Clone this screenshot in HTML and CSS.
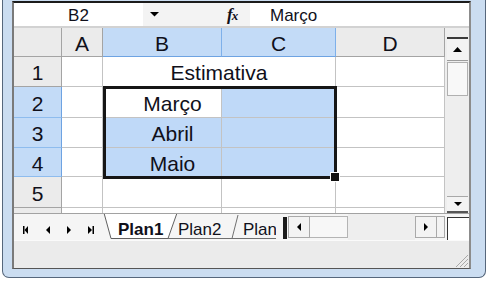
FILE: index.html
```html
<!DOCTYPE html>
<html lang="pt">
<head>
    <meta charset="UTF-8">
    <title>Plan1</title>
    <link rel="stylesheet" href="styles.css">
</head>
<body>
<div class="window">
    <div class="app">
        <!-- barra de fórmulas -->
        <div class="fbar">
            <div class="namebox">B2</div>
            <div class="fbtns">
                <svg class="dd" width="9" height="5" viewBox="0 0 9 5"><polygon points="0,0 9,0 4.5,4.5" fill="#000"/></svg>
                <span class="fx"><i>f</i><i class="x">x</i></span>
            </div>
            <div class="formula">Março</div>
        </div>

        <div class="main">
            <div class="sheet">
                <div class="hd corner"></div>
                <div class="hd">A</div>
                <div class="hd on">B</div>
                <div class="hd on">C</div>
                <div class="hd">D</div>

                <div class="rh">1</div>
                <div class="c"></div>
                <div class="c merged">Estimativa</div>
                <div class="c"></div>

                <div class="rh on">2</div>
                <div class="c"></div>
                <div class="c txt active">Março<div class="selbox"></div></div>
                <div class="c sel"></div>
                <div class="c"></div>

                <div class="rh on">3</div>
                <div class="c"></div>
                <div class="c sel txt">Abril</div>
                <div class="c sel"></div>
                <div class="c"></div>

                <div class="rh on">4</div>
                <div class="c"></div>
                <div class="c sel txt">Maio</div>
                <div class="c sel"></div>
                <div class="c"></div>

                <div class="rh">5</div>
                <div class="c"></div>
                <div class="c"></div>
                <div class="c"></div>
                <div class="c"></div>

                <div class="rh">6</div>
                <div class="c"></div>
                <div class="c"></div>
                <div class="c"></div>
                <div class="c"></div>
            </div>
            <div class="vscroll">
                <div class="vbtn up">
                    <svg width="9" height="5" viewBox="0 0 9 5"><polygon points="0,5 9,5 4.5,0" fill="#000"/></svg>
                </div>
                <div class="vthumb"></div>
                <div class="vtrack"></div>
                <div class="vbtn down">
                    <svg width="8" height="4" viewBox="0 0 8 4"><polygon points="0,0 8,0 4,4" fill="#000"/></svg>
                </div>
            </div>
        </div>

        <!-- abas das planilhas -->
        <div class="tabbar">
            <div class="nav">
                <svg width="86" height="25" viewBox="0 0 86 25">
                    <rect x="9" y="12" width="1.5" height="8" fill="#000"/>
                    <polygon points="14,12 10.5,16 14,20" fill="#000"/>
                    <polygon points="36,12 32,16 36,20" fill="#000"/>
                    <polygon points="53,12 57,16 53,20" fill="#000"/>
                    <polygon points="74,12 78,16 74,20" fill="#000"/>
                    <rect x="78.5" y="12" width="1.5" height="8" fill="#000"/>
                </svg>
            </div>
            <div class="tabs">
                <svg class="tabline" width="176" height="25" viewBox="0 0 176 25">
                    <polyline points="68,24.5 132,24.5 138,1" fill="none" stroke="#707070"/>
                    <polyline points="132,24.5 176,24.5" fill="none" stroke="#707070"/>
                    <polygon points="4,-1 11,24.5 68,24.5 77,-1" fill="#fff"/>
                    <polyline points="4,-1 11,24.5 68,24.5 77,-1" fill="none" stroke="#606060"/>
                </svg>
                <span class="tab t1">Plan1</span>
                <span class="tab t2">Plan2</span>
                <span class="tab t3">Plan3</span>
            </div>
            <div class="gap"></div>
            <div class="hscroll">
                <div class="hsplit"></div>
                <div class="hbtn">
                    <svg width="4" height="8" viewBox="0 0 4 8"><polygon points="4,0 0,4 4,8" fill="#000"/></svg>
                </div>
                <div class="hthumb"></div>
                <div class="htrack"></div>
                <div class="hbtn">
                    <svg width="4" height="8" viewBox="0 0 4 8"><polygon points="0,0 4,4 0,8" fill="#000"/></svg>
                </div>
                <div class="hbox"></div>
            </div>
            <div class="hcorner"></div>
        </div>

        <div class="status">
            <svg class="grip" width="13" height="13" viewBox="0 0 13 13">
                <line x1="1" y1="13" x2="13" y2="1" stroke="#a8a8a8"/>
                <line x1="5" y1="13" x2="13" y2="5" stroke="#a8a8a8"/>
                <line x1="9" y1="13" x2="13" y2="9" stroke="#a8a8a8"/>
            </svg>
        </div>
    </div>
</div>
</body>
</html>
```

FILE: styles.css
```css
* {
    margin: 0;
    padding: 0;
    box-sizing: border-box;
}

body {
    background: #fff;
    font-family: "Liberation Sans", Arial, sans-serif;
    color: #10101a;
}

.window {
    margin-left: 2px;
    width: 484px;
    height: 278px;
    padding: 1px 14px 8px 9px;
    border: 1px solid #56677c;
    border-top: none;
    border-radius: 0 0 7px 7px;
    background: #cbddf1;
}

.app {
    height: 268px;
    display: flex;
    flex-direction: column;
    background: #fff;
    border-top: 2px solid #1b1b1b;
    border-left: 2px solid #7a7a7a;
    border-right: 2px solid #8c8c8c;
    border-bottom: 1px solid #555;
}

/* barra de fórmulas */
.fbar {
    height: 25px;
    display: flex;
    border-bottom: 2px solid #d2d2d2;
    font-size: 17px;
    line-height: 23px;
}

.namebox {
    width: 129px;
    text-align: center;
    padding-top: 1px;
}

.fbtns {
    width: 107px;
    display: flex;
    align-items: center;
    background: #f3f3f3;
}

.dd {
    margin-left: 7px;
}

.fx {
    margin-left: 68px;
    font-family: "Liberation Serif", serif;
    font-weight: bold;
    font-size: 17px;
    line-height: 17px;
}

.fx .x {
    font-size: 13px;
    margin-left: -1px;
}

.formula {
    flex: 1;
    padding: 1px 0 0 20px;
}

/* grade */
.main {
    height: 185px;
    display: flex;
}

.sheet {
    width: 431px;
    height: 185px;
    overflow: hidden;
    display: grid;
    grid-template-columns: 48px 41px 119px 114px 109px;
    grid-template-rows: 29px 30px 31px 30px 29px 31px 30px;
}

.hd, .rh, .c {
    display: flex;
    align-items: center;
    justify-content: center;
    font-size: 21px;
    padding-top: 3px;
}

.hd, .rh {
    background: #ebebeb;
    border-right: 1px solid #a4a4a4;
    border-bottom: 1px solid #a4a4a4;
}

.hd.on {
    background: #c3dbf7;
    border-right-color: #7eb0ea;
    border-bottom-color: #6ea3e2;
}

.rh.on {
    background: #c3dbf7;
    border-right-color: #6ea3e2;
    border-bottom-color: #8ebcee;
}

.c {
    border-right: 1px solid #c3c3c3;
    border-bottom: 1px solid #c3c3c3;
}

.c.sel {
    background: #bfd9f8;
}

.c.merged {
    grid-column: span 2;
}

.c.txt {
    padding-left: 21px;
}

.c.active {
    position: relative;
}

/* borda da seleção B2:C4 */
.selbox {
    position: absolute;
    left: 0;
    top: -1px;
    width: 234px;
    height: 93px;
    border: 3px solid #161616;
    z-index: 2;
}

.selbox::after {
    content: "";
    position: absolute;
    right: -6px;
    bottom: -6px;
    width: 8px;
    height: 8px;
    background: #111;
    border: 1px solid #fff;
}

/* barra de rolagem vertical */
.vscroll {
    width: 24px;
    display: flex;
    flex-direction: column;
    padding: 9px 1px 0 2px;
    background: #eeeeee;
}

.vbtn {
    display: flex;
    align-items: center;
    justify-content: center;
    background: #f3f3f3;
}

.vbtn.up {
    height: 24px;
    border-top: 2px solid #3a3a3a;
    border-bottom: 1px solid #9c9c9c;
}

.vthumb {
    height: 34px;
    margin-top: 1px;
    background: #f8f8f8;
    border: 1px solid #b0b0b0;
}

.vtrack {
    flex: 1;
}

.vbtn.down {
    height: 17px;
    border-top: 1px solid #a8a8a8;
    border-bottom: 2px solid #555;
}

/* abas */
.tabbar {
    height: 27px;
    display: flex;
    background: #f5f5f5;
    border-top: 1px solid #a2a2a2;
}

.nav {
    width: 86px;
    flex-shrink: 0;
}

.tabs {
    width: 176px;
    flex-shrink: 0;
    position: relative;
    overflow: hidden;
    display: flex;
    white-space: nowrap;
}

.tabline {
    position: absolute;
    left: 0;
    top: 0;
}

.tab {
    position: relative;
    flex-shrink: 0;
    font-size: 17px;
    line-height: 20px;
    padding: 6px 0 0 18px;
}

.t1 {
    width: 60px;
    font-weight: bold;
}

.t2 {
    width: 68px;
}

.t3 {
    padding-left: 15px;
}

.gap {
    width: 7px;
    flex-shrink: 0;
}

.hscroll {
    width: 162px;
    flex-shrink: 0;
    display: flex;
}

.hsplit {
    width: 4px;
    margin: 3px 1px 1px 0;
    background: #1a1a1a;
}

.hbtn {
    width: 22px;
    height: 22px;
    margin-top: 2px;
    display: flex;
    align-items: center;
    justify-content: center;
    background: #f3f3f3;
    border: 1px solid #a9a9a9;
}

.hbtn:last-of-type {
    width: 23px;
}

.hthumb {
    width: 38px;
    height: 22px;
    margin-top: 2px;
    background: #f7f7f7;
    border: 1px solid #b4b4b4;
    border-left: none;
}

.htrack {
    width: 67px;
    background: #eeeeee;
}

.hbox {
    width: 8px;
    height: 22px;
    margin-top: 2px;
    background: #f3f3f3;
    border: 1px solid #a9a9a9;
    border-left: none;
}

.hcorner {
    width: 22px;
    margin: 3px 0 0 2px;
    background: #fff;
    border-left: 1px solid #333;
    border-top: 1px solid #333;
}

.status {
    height: 28px;
    display: flex;
    justify-content: flex-end;
    align-items: flex-end;
    background: #ebebeb;
    border-top: 1px solid #fafafa;
}

.grip {
    margin: 0 1px 1px 0;
}
```
